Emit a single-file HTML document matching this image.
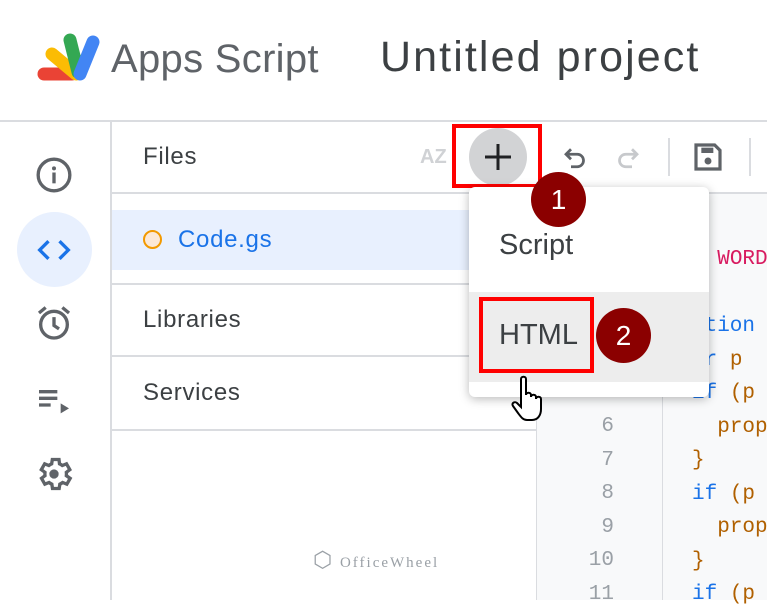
<!DOCTYPE html>
<html><head><style>
*{margin:0;padding:0;box-sizing:border-box}
body{width:767px;height:600px;overflow:hidden;background:#fff;font-family:"Liberation Sans",Arial,sans-serif;position:relative;color:#3c4043}
.a{position:absolute}
.mono{font-family:"Liberation Mono",monospace;font-size:21px}
.lbl{font-size:24px;letter-spacing:0.7px}
</style></head><body>
<!-- header -->
<svg class="a" style="left:36px;top:32px" width="66" height="52" viewBox="0 0 66 52">
<line x1="8" y1="42" x2="36" y2="42" stroke="#ea4335" stroke-width="13" stroke-linecap="round"/>
<line x1="16" y1="22" x2="40" y2="42" stroke="#fbbc04" stroke-width="13" stroke-linecap="round"/>
<line x1="34" y1="8" x2="42" y2="40" stroke="#34a853" stroke-width="13" stroke-linecap="round"/>
<line x1="57" y1="10" x2="44" y2="42" stroke="#4285f4" stroke-width="13" stroke-linecap="round"/>
</svg>
<div class="a" style="left:111px;top:37px;font-size:40px;letter-spacing:0.3px;color:#5f6368">Apps Script</div>
<div class="a" style="left:380px;top:33px;font-size:43px;letter-spacing:2.1px;color:#3c4043">Untitled project</div>
<div class="a" style="left:0;top:120px;width:767px;height:2px;background:#dadce0"></div>
<!-- left rail -->
<div class="a" style="left:110px;top:122px;width:2px;height:478px;background:#dadce0"></div>
<svg class="a" style="left:34px;top:155px" width="40" height="40" viewBox="0 0 24 24"><circle cx="12" cy="12" r="9.5" fill="none" stroke="#5f6368" stroke-width="2"/><rect x="11" y="10.5" width="2" height="6.5" fill="#5f6368"/><circle cx="12" cy="8" r="1.2" fill="#5f6368"/></svg>
<div class="a" style="left:17px;top:212px;width:75px;height:75px;border-radius:50%;background:#e8f0fe"></div>
<svg class="a" style="left:34px;top:230px" width="40" height="40" viewBox="0 0 24 24"><path d="M9.4 16.6L4.8 12l4.6-4.6L8 6l-6 6 6 6 1.4-1.4zm5.2 0l4.6-4.6-4.6-4.6L16 6l6 6-6 6-1.4-1.4z" fill="#1a73e8"/></svg>
<svg class="a" style="left:34px;top:303px" width="40" height="40" viewBox="0 0 24 24"><circle cx="12" cy="13" r="8" fill="none" stroke="#5f6368" stroke-width="2"/><path d="M12 8.5v5l3 2" fill="none" stroke="#5f6368" stroke-width="2"/><path d="M3 6l4-3.3M21 6l-4-3.3" stroke="#5f6368" stroke-width="2"/></svg>
<svg class="a" style="left:34px;top:380px" width="40" height="40" viewBox="0 0 24 24"><path d="M3 6h11v2H3zm0 4h11v2H3zm0 4h7v2H3zm13 0v6l5-3z" fill="#5f6368"/></svg>
<svg class="a" style="left:34px;top:454px" width="40" height="40" viewBox="0 0 24 24"><path d="M19.4 13a7.7 7.7 0 000-2l2.1-1.6-2-3.5-2.5 1a7.5 7.5 0 00-1.7-1L15 3.3h-4l-.4 2.6a7.5 7.5 0 00-1.7 1l-2.5-1-2 3.5L6.6 11a7.7 7.7 0 000 2l-2.1 1.6 2 3.5 2.5-1a7.5 7.5 0 001.7 1l.4 2.6h4l.4-2.6a7.5 7.5 0 001.7-1l2.5 1 2-3.5z" fill="none" stroke="#5f6368" stroke-width="2"/><circle cx="12" cy="12" r="2.8" fill="#5f6368"/></svg>
<!-- files panel -->
<div class="a lbl" style="left:143px;top:143px;color:#3c4043">Files</div>
<div class="a" style="left:420px;top:146px;font-size:20px;font-weight:bold;color:#d0d2d5">AZ</div>
<div class="a" style="left:112px;top:192px;width:425px;height:2px;background:#dadce0"></div>
<div class="a" style="left:112px;top:210px;width:425px;height:60px;background:#e8f0fe"></div>
<div class="a" style="left:143px;top:230px;width:19px;height:19px;border-radius:50%;border:2px solid #f29900;background:#fce8d6"></div>
<div class="a lbl" style="left:178px;top:226px;color:#1a73e8">Code.gs</div>
<div class="a" style="left:112px;top:283px;width:425px;height:2px;background:#dadce0"></div>
<div class="a lbl" style="left:143px;top:306px;color:#3c4043">Libraries</div>
<div class="a" style="left:112px;top:355px;width:425px;height:2px;background:#dadce0"></div>
<div class="a lbl" style="left:143px;top:379px;color:#3c4043">Services</div>
<div class="a" style="left:112px;top:429px;width:425px;height:2px;background:#dadce0"></div>
<div class="a" style="left:536px;top:193px;width:1px;height:407px;background:#dadce0"></div>
<div class="a" style="left:313px;top:547px;font-family:'Liberation Serif',serif;font-size:15px;letter-spacing:2px;color:#9aa0a6"><span style="font-size:22px">⬡</span> OfficeWheel</div>
<!-- toolbar -->
<div class="a" style="left:537px;top:192px;width:230px;height:2px;background:#dadce0"></div>
<div class="a" style="left:469px;top:128px;width:58px;height:58px;border-radius:50%;background:#d2d3d5"></div>
<svg class="a" style="left:482px;top:141px" width="32" height="32" viewBox="0 0 32 32"><path d="M16 3v26M3 16h26" stroke="#202124" stroke-width="3"/></svg>
<div class="a" style="left:452px;top:124px;width:90px;height:64px;border:4px solid #ff0000"></div>
<svg class="a" style="left:560px;top:143px" width="32" height="30" viewBox="0 0 24 24"><path d="M8 5L4 9l4 4M4 9h9a5 5 0 010 10H8" fill="none" stroke="#5f6368" stroke-width="2.2"/></svg>
<svg class="a" style="left:611px;top:143px" width="32" height="30" viewBox="0 0 24 24"><path d="M16 5l4 4-4 4M20 9h-9a5 5 0 000 10h5" fill="none" stroke="#c7c9cc" stroke-width="2.2"/></svg>
<div class="a" style="left:668px;top:138px;width:2px;height:38px;background:#dadce0"></div>
<svg class="a" style="left:692px;top:141px" width="32" height="32" viewBox="0 0 24 24"><path d="M4 3h13l4 4v14H3V3z" fill="none" stroke="#5f6368" stroke-width="2.4"/><rect x="7" y="5" width="9" height="4" fill="#5f6368"/><circle cx="12" cy="15" r="2.6" fill="#5f6368"/></svg>
<div class="a" style="left:749px;top:138px;width:2px;height:38px;background:#dadce0"></div>
<!-- editor -->
<div class="a" style="left:537px;top:194px;width:230px;height:406px;background:#f8f9fa"></div>
<div class="a" style="left:662px;top:194px;width:1px;height:406px;background:#dadce0"></div>
<div class="a mono" style="left:540px;top:0;width:74px;text-align:right;color:#9aa0a6;line-height:33.5px">
<div style="position:absolute;top:410px;right:0">6<br>7<br>8<br>9<br>10<br>11</div></div>
<div class="a mono" style="left:692px;top:243px;line-height:33.5px;white-space:pre;color:#1a73e8">  <span style="color:#d81b60">WORD</span>

<span>ction</span>
<span>ar </span><span style="color:#b06000">p</span>
if <span style="color:#b06000">(p</span>
  <span style="color:#b06000">prop</span>
<span style="color:#b06000">}</span>
if <span style="color:#b06000">(p</span>
  <span style="color:#b06000">prop</span>
<span style="color:#b06000">}</span>
if <span style="color:#b06000">(p</span></div>
<!-- menu -->
<div class="a" style="left:469px;top:187px;width:240px;height:210px;background:#fff;border-radius:6px;box-shadow:0 2px 10px rgba(0,0,0,.28)"></div>
<div class="a" style="left:469px;top:292px;width:240px;height:90px;background:#ededed"></div>
<div class="a" style="left:499px;top:229px;font-size:29px;color:#3c4043">Script</div>
<div class="a" style="left:499px;top:319px;font-size:29px;color:#3c4043">HTML</div>
<div class="a" style="left:479px;top:297px;width:115px;height:76px;border:4px solid #ff0000"></div>
<div class="a" style="left:531px;top:172px;width:55px;height:55px;border-radius:50%;background:#8b0000;color:#fff;font-size:28px;text-align:center;line-height:55px">1</div>
<div class="a" style="left:596px;top:308px;width:55px;height:55px;border-radius:50%;background:#8b0000;color:#fff;font-size:28px;text-align:center;line-height:55px">2</div>
<!-- cursor -->
<svg class="a" style="left:511px;top:375px" width="36" height="50" viewBox="0 0 36 50"><path d="M10 4c0-3 5-3 5 0v16c0-3 5-3 5 0v2c0-3 5-3 5 0v2c0-3 5-3 5 0v10c0 6-3 11-9 11h-5c-4 0-6-3-9-7l-5-7c-2-3 2-5 4-3l4 4z" fill="#fff" stroke="#000" stroke-width="2"/></svg>
</body></html>
